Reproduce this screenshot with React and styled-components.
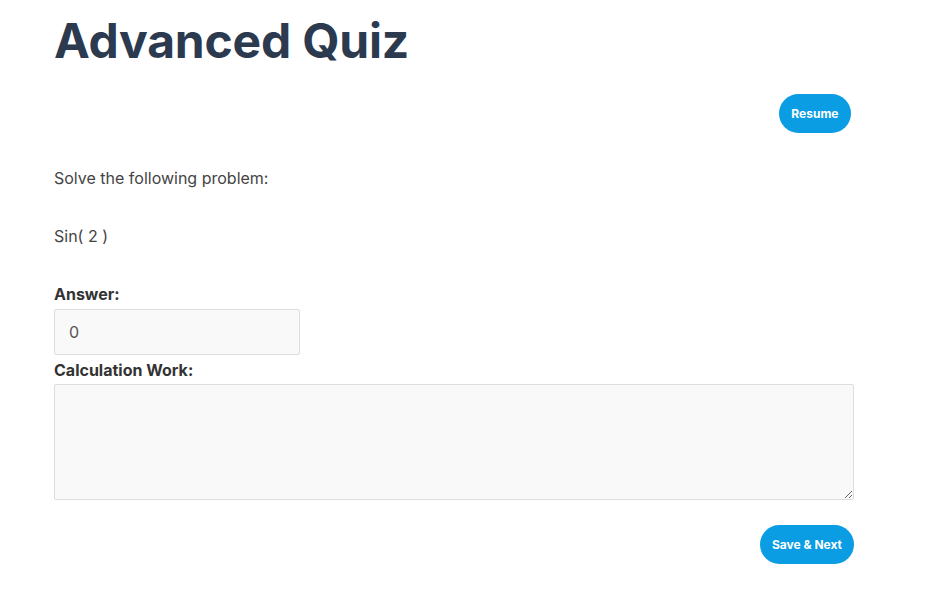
import styled, { createGlobalStyle } from "styled-components";

const GlobalStyle = createGlobalStyle`
    body {
        margin: 0;
        background: #ffffff;
        font-family: Inter, "Noto Sans", sans-serif;
        color: #333333;
    }
`;

const Page = styled.div`
    width: 800px;
    padding: 12px 0 0 54px;
`;

const Title = styled.h1`
    margin: 0;
    font-size: 48px;
    font-weight: 700;
    line-height: 58px;
    color: #2b3a4f;
    letter-spacing: -0.2px;
`;

const TopBar = styled.div`
    display: flex;
    justify-content: flex-end;
    padding-right: 3px;
    margin-top: 24px;
`;

const PillButton = styled.button`
    height: 39px;
    padding: 0 ${(p) => p.$pad || "12px"};
    border: none;
    border-radius: 20px;
    background: #0a9de3;
    color: #ffffff;
    font-family: Inter, sans-serif;
    font-size: 12px;
    font-weight: 700;
    cursor: pointer;
`;

const Text = styled.p`
    margin: ${(p) => p.$top || "0"} 0 0;
    font-size: 16px;
    font-weight: 400;
    line-height: 20px;
    color: #444444;
`;

const Label = styled.label`
    display: block;
    margin-top: ${(p) => p.$top || "0"};
    font-size: 16px;
    font-weight: 700;
    line-height: 20px;
    color: #333333;
`;

const AnswerInput = styled.input`
    display: block;
    box-sizing: border-box;
    width: 246px;
    height: 46px;
    margin-top: 5px;
    padding: 0 14px;
    border: 1px solid #dddddd;
    border-radius: 2px;
    background: #f9f9f9;
    font-family: Inter, sans-serif;
    font-size: 16px;
    color: #555555;
    outline: none;
`;

const WorkArea = styled.textarea`
    display: block;
    box-sizing: border-box;
    width: 800px;
    height: 116px;
    margin-top: 4px;
    padding: 10px 14px;
    border: 1px solid #dddddd;
    border-radius: 2px;
    background: #f9f9f9;
    font-family: Inter, sans-serif;
    font-size: 16px;
    outline: none;
`;

const BottomBar = styled.div`
    display: flex;
    justify-content: flex-end;
    margin-top: 25px;
`;

export default function App() {
    return (
        <>
            <GlobalStyle />
            <Page>
                <Title>Advanced Quiz</Title>
                <TopBar>
                    <PillButton $pad="12.5px">Resume</PillButton>
                </TopBar>
                <Text $top="35px">Solve the following problem:</Text>
                <Text $top="38px">Sin( 2 )</Text>
                <Label $top="38px">Answer:</Label>
                <AnswerInput defaultValue="0" />
                <Label $top="5px">Calculation Work:</Label>
                <WorkArea />
                <BottomBar>
                    <PillButton>Save &amp; Next</PillButton>
                </BottomBar>
            </Page>
        </>
    );
}
